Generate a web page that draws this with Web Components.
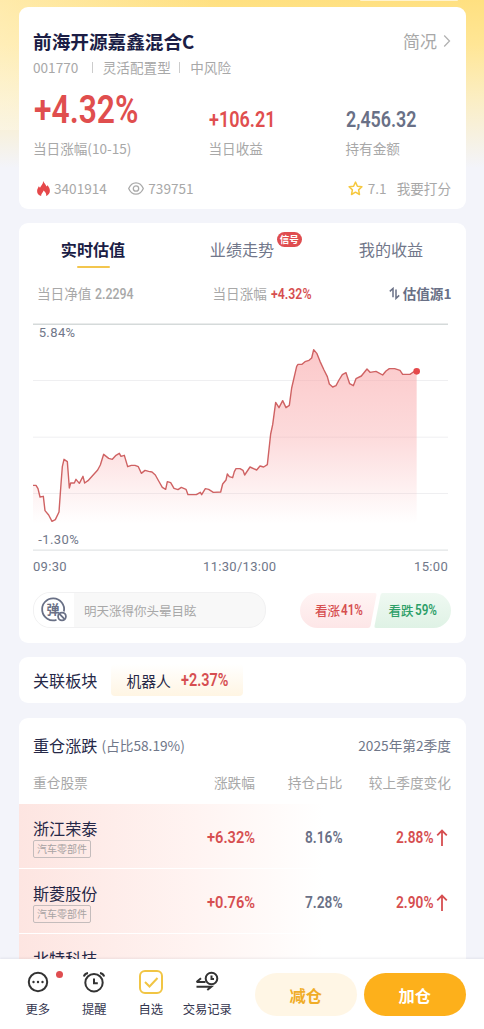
<!DOCTYPE html>
<html lang="zh-CN">
<head>
<meta charset="UTF-8">
<meta name="viewport" content="width=device-width, initial-scale=1.0">
<title>前海开源嘉鑫混合C</title>
<style>
    body {
        margin: 0;
        font-family: "Noto Sans CJK SC", sans-serif;
        overflow: hidden;
    }
</style>
</head>
<body>
<fund-page>
    <fund-summary></fund-summary>
    <fund-estimate></fund-estimate>
    <related-sector name="机器人" change="+2.37%"></related-sector>
    <fund-holdings>
        <stock-row name="浙江荣泰" tag="汽车零部件" change="+6.32%" share="8.16%" diff="2.88%"></stock-row>
        <stock-row name="斯菱股份" tag="汽车零部件" change="+0.76%" share="7.28%" diff="2.90%"></stock-row>
        <stock-row name="北特科技" tag="汽车零部件"></stock-row>
    </fund-holdings>
    <fund-toolbar slot="footer"></fund-toolbar>
</fund-page>

<script>
function define(name, html) {
    customElements.define(name, class extends HTMLElement {
        constructor() {
            super();
            this.attachShadow({ mode: 'open' });
        }

        connectedCallback() {
            this.shadowRoot.innerHTML = typeof html === 'function' ? html(this) : html;
        }
    });
}

// Condensed figures: cap = height of the digits, w = width of the whole number
define('num-text', (el) => {
    const cap = Number(el.getAttribute('cap'));
    const w = Number(el.getAttribute('w'));
    return `
        <style>
            :host { display: block; flex: none; }
            svg { display: block; overflow: visible; }
            text { font-family: Roboto, sans-serif; font-weight: var(--num-weight, 600); fill: currentColor; }
        </style>
        <svg width="${w}" height="${cap}">
            <text x="0" y="${cap}" font-size="${(cap / 0.711).toFixed(2)}" textLength="${w}" lengthAdjust="spacingAndGlyphs">${el.getAttribute('value')}</text>
        </svg>`;
});

define('fund-page', `
    <style>
        :host {
            display: flex;
            flex-direction: column;
            height: 1029px;
            overflow: hidden;
            background:
                linear-gradient(90deg, rgba(255, 250, 235, .4), rgba(255, 250, 235, 0) 45%) 0 0 / 100% 130px no-repeat,
                linear-gradient(180deg, #ffe080 0, #ffe696 45px, #fbeec4 100px, #f3f4fa 168px);
        }
        .peek {
            flex: none;
            width: 98px;
            height: 1px;
            margin-left: 360px;
            background: #fff3cd;
            border-radius: 0 0 6px 6px;
        }
        main {
            flex: 1;
            min-height: 0;
            overflow: hidden;
            display: flex;
            flex-direction: column;
            gap: 14.5px;
            padding: 6px 18.5px 0;
        }
    </style>
    <div class="peek"></div>
    <main><slot></slot></main>
    <slot name="footer"></slot>
`);

const card = `
    :host {
        display: block;
        flex: none;
        box-sizing: border-box;
        background: #fff;
        border-radius: 9px;
        white-space: nowrap;
    }
`;

define('fund-summary', `
    <style>
        ${card}
        :host { height: 201.5px; padding: 21px 14.5px 0; color: #a8a8a8; font-size: 13.6px; line-height: 20px; }
        header { display: flex; justify-content: space-between; align-items: center; height: 25px; }
        h1 { margin: 0; font-size: 18.7px; font-weight: 700; color: #1b1d45; letter-spacing: -.05px; }
        .more { display: flex; align-items: center; gap: 6px; font-size: 17px; }
        .meta { display: flex; align-items: center; margin-top: 4px; }
        .meta i { width: 1px; height: 11px; background: #ccc; margin: 0 10px 0 13.5px; }
        .meta i + span + i { margin: 0 10.5px 0 8px; }
        .metrics { display: grid; grid-template-columns: 175.5px 137px 1fr; height: 81px; }
        .metrics div { display: flex; flex-direction: column; justify-content: flex-end; }
        .metrics num-text { margin-bottom: 11px; }
        .metrics div:first-child num-text { margin: 0 0 15px 1px; }
        .red { color: #e04e4e; }
        .gray { color: #697086; }
        .stats { display: flex; align-items: center; height: 20px; margin-top: 20px; }
        .stats svg { margin-right: 4.5px; }
    </style>
    <header>
        <h1>前海开源嘉鑫混合C</h1>
        <span class="more">简况<svg width="8" height="14" viewBox="0 0 8 14" fill="none" stroke="#b2b2b2" stroke-width="1.3"><path d="M1.2 1.5 6.5 7 1.2 12.5"/></svg></span>
    </header>
    <div class="meta"><span>001770</span><i></i><span>灵活配置型</span><i></i><span>中风险</span></div>
    <div class="metrics">
        <div><num-text class="red" cap="27" w="104.5" value="+4.32%"></num-text>当日涨幅(10-15)</div>
        <div><num-text class="red" cap="16" w="66.5" value="+106.21"></num-text>当日收益</div>
        <div><num-text class="gray" cap="16" w="70.5" value="2,456.32"></num-text>持有金额</div>
    </div>
    <div class="stats">
        <svg style="margin-left:3.5px" width="13" height="15" viewBox="0 0 13 15"><path fill="#e5484a" d="M6.2 0C6.8 2.4 9.2 3.4 9.4 5.6L10.6 4.2C12 6 13 8 12.9 10c0 2.5-1.7 4.2-3.8 4.9.5-2.2-.6-3.9-2.6-5.4C6.4 11.3 4 12.3 4.1 14.9 1.6 14.2 0 12.3.1 9.9.2 8 1.2 6.6 1.8 5.2L3 6.8C4 4.6 6.1 3.3 6.2 0Z"/></svg>
        <span>3401914</span>
        <svg style="margin-left:21px" width="16" height="13" viewBox="0 0 16 13" fill="none" stroke="#aaa" stroke-width="1.3"><path d="M.7 6.5C2.3 2.7 5 .8 8 .8s5.7 1.9 7.3 5.7C13.7 10.3 11 12.2 8 12.2S2.3 10.3.7 6.5Z"/><circle cx="8" cy="6.5" r="2.7"/></svg>
        <span>739751</span>
        <svg style="margin-left:auto" width="15" height="15" viewBox="0 0 15 15" fill="none" stroke="#f6c83e" stroke-width="1.5" stroke-linejoin="round"><path d="m7.5 1.1 1.9 4.2 4.5.5-3.3 3.1.9 4.6-4-2.3-4 2.3.9-4.6L1.1 5.8l4.5-.5Z"/></svg>
        <span>7.1</span><span style="margin-left:10px">我要打分</span>
    </div>
`);

// Chart units are a third of a pixel
const points = [
    [39,496],[48,496],[54,506],[60,531],[70,529],[75,572],[86,585],[96,604],[106,599],[117,576],
    [123,492],[127,440],[132,418],[142,425],[148,504],[152,489],[163,489],[168,478],[178,490],[189,469],
    [194,489],[204,482],[233,450],[241,435],[251,403],[266,415],[277,418],[288,406],[298,400],[303,409],
    [313,406],[323,440],[334,436],[345,436],[355,440],[364,460],[375,451],[386,454],[396,456],[406,465],
    [416,483],[427,502],[437,508],[442,485],[452,488],[462,505],[474,509],[484,502],[498,508],[504,524],
    [529,524],[541,517],[545,524],[556,506],[566,508],[580,517],[602,516],[608,492],[618,480],[622,462],
    [628,470],[638,473],[643,455],[648,446],[660,446],[669,451],[674,465],[690,441],[710,450],[720,438],
    [731,441],[742,434],[752,342],[758,314],[767,247],[777,263],[788,242],[798,263],[808,256],[815,204],
    [830,139],[834,133],[846,133],[855,125],[867,121],[875,114],[881,89],[891,101],[900,124],[912,150],
    [922,170],[928,192],[938,201],[948,197],[957,180],[967,164],[978,158],[989,191],[1000,197],[1008,176],
    [1024,168],[1041,147],[1050,157],[1068,154],[1088,165],[1098,153],[1108,146],[1124,146],[1140,151],
    [1148,163],[1170,163],[1180,156],[1190,154]
];

define('estimate-chart', () => {
    const line = points.map((p) => p.join(' ')).join('L');
    return `
        <style>
            :host { display: block; font: 13px Roboto, sans-serif; letter-spacing: .3px; color: #707789; }
            svg { display: block; }
            text { font-size: 39px; letter-spacing: 1.2px; fill: currentColor; }
            .axis { display: flex; justify-content: space-between; line-height: 16px; margin-top: 6px; }
            .axis span:nth-child(2) { margin-left: -1.5px; }
        </style>
        <svg width="415" height="233" viewBox="39 0 1245 699">
            <defs>
                <linearGradient id="fill" gradientUnits="userSpaceOnUse" x1="0" y1="89" x2="0" y2="610">
                    <stop offset="0" stop-color="#f9a4a6" stop-opacity=".6"/>
                    <stop offset=".5" stop-color="#f9a4a6" stop-opacity=".4"/>
                    <stop offset="1" stop-color="#f9a4a6" stop-opacity="0"/>
                </linearGradient>
            </defs>
            <path d="M39 181.5H1284M39 351.5H1284M39 520.5H1284" stroke="#efeff1" stroke-width="3"/>
            <path d="M39 12.5H1284" stroke="#d5dada" stroke-width="4.5"/>
            <path d="M39 690.5H1284" stroke="#e2e5e6" stroke-width="4"/>
            <path d="M${line}V610H39Z" fill="url(#fill)"/>
            <path d="M${line}" fill="none" stroke="#cf6263" stroke-width="4.2" stroke-linejoin="round"/>
            <circle cx="1190" cy="154" r="10" fill="#e5484a"/>
            <text x="56" y="50">5.84%</text>
            <text x="55" y="673">-1.30%</text>
        </svg>
        <div class="axis"><span>09:30</span><span>11:30/13:00</span><span>15:00</span></div>`;
});

define('fund-estimate', `
    <style>
        ${card}
        :host { height: 419.5px; font-size: 13.6px; color: #a8a8a8; }
        .tabs { display: flex; padding-top: 12px; height: 33px; font-size: 16.1px; line-height: 28px; color: #71778a; text-align: center; }
        .tabs > span { flex: 1; }
        .tabs .on { font-weight: 700; color: #1b1d45; display: flex; flex-direction: column; align-items: center; }
        .on::after { content: ""; width: 33px; height: 2px; margin-top: 3px; background: #f3c64e; border-radius: 1px; }
        .tab { position: relative; }
        .badge {
            position: absolute;
            left: 67px;
            top: -5px;
            width: 25px;
            height: 15px;
            border-radius: 8px;
            background: #df4d50;
            color: #fff;
            font-size: 9.5px;
            line-height: 14.5px;
            font-weight: 700;
        }
        .info { display: grid; grid-template-columns: 175.5px 1fr auto; align-items: center; height: 20px; line-height: 20px; padding: 0 14px 0 18.5px; margin-top: 15px; }
        .info span { display: flex; align-items: center; gap: 4px; }
        .info span num-text { margin-top: 1px; --num-weight: 500; }
        .info .red { --num-weight: 600; }
        .info .source { color: #697086; font-weight: 600; gap: 3px; }
        estimate-chart { margin: 17px 17.5px 0 14.5px; }
        .votes { display: flex; justify-content: space-between; align-items: center; padding: 0 14.5px; margin-top: 17px; height: 36px; }
        .danmu { box-sizing: border-box; display: flex; align-items: center; width: 233px; height: 36px; border: 1px solid #f1f1f2; border-radius: 17px; overflow: hidden; background: #f8f8f8; font-size: 12.5px; }
        .danmu svg { flex: none; width: 40px; height: 34px; background: #fff; margin-right: 10px; }
        .danmu text { font-size: 13px; font-weight: 700; fill: #697086; }
        .vote { position: relative; display: flex; width: 151px; height: 35px; align-items: center; font-size: 12.5px; font-weight: 500; }
        .vote > svg { position: absolute; inset: 0; }
        .vote span { position: relative; display: flex; align-items: center; gap: 1px; }
        .vote num-text { margin-top: -1px; }
        .red { color: #d64e50; }
    </style>
    <div class="tabs">
        <span class="on">实时估值</span>
        <span><span class="tab">业绩走势<b class="badge">信号</b></span></span>
        <span>我的收益</span>
    </div>
    <div class="info">
        <span>当日净值<num-text cap="10.7" w="38.5" value="2.2294"></num-text></span>
        <span>当日涨幅<num-text class="red" cap="10.7" w="40.5" value="+4.32%"></num-text></span>
        <span class="source"><svg width="11" height="13" viewBox="0 0 11 13" fill="none" stroke="#697086" stroke-width="1.5"><path d="M.8 4.4 4 1.5V10.2M7 2.5V11.400L10.200 8.400"/></svg>估值源1</span>
    </div>
    <estimate-chart></estimate-chart>
    <div class="votes">
        <div class="danmu">
            <svg viewBox="0 0 40 34" fill="none" stroke="#697086" stroke-width="1.8">
                <path d="M29.900 18.500A11 11 0 1 0 22.500 26.800"/>
                <text x="12.500" y="21" stroke="none">弹</text>
                <circle cx="28" cy="23.500" r="3.900"/><path d="m25.200 20.700 5.600 5.600"/>
            </svg>
            明天涨得你头晕目眩
        </div>
        <div class="vote">
            <svg width="151" height="35" viewBox="0 0 151 35">
                <defs>
                    <linearGradient id="up" x2="0" y2="1"><stop stop-color="#fff4f4"/><stop offset="1" stop-color="#fde6e7"/></linearGradient>
                    <linearGradient id="down" x2="0" y2="1"><stop stop-color="#eff9f2"/><stop offset="1" stop-color="#dff2e5"/></linearGradient>
                </defs>
                <path fill="url(#up)" d="M17.5 0H75q2 0 1.500 2L70.500 33q-.5 2-2.500 2H17.500a17.500 17.500 0 0 1 0-35Z"/>
                <path fill="url(#down)" d="M82.500 0H133.500a17.500 17.500 0 0 1 0 35H76q-2 0-1.500-2L80.500 2q.5-2 2-2Z"/>
            </svg>
            <span class="red" style="margin-left:15px">看涨<num-text cap="11" w="22" value="41%"></num-text></span>
            <span style="margin-left:25.500px;color:#2d9f68">看跌<num-text cap="11" w="22" value="59%"></num-text></span>
        </div>
    </div>
`);

define('related-sector', (el) => `
    <style>
        ${card}
        :host { display: flex; align-items: center; height: 46px; padding-left: 14.5px; font-size: 16.1px; color: #262847; }
        .chip { display: flex; align-items: center; gap: 10px; height: 32px; padding: 0 15px; margin-left: 14px; border-radius: 4px; font-size: 14.8px; background: linear-gradient(180deg, #fff, #fff5e3); }
        num-text { color: #d64e50; margin-top: -1px; }
    </style>
    <span>关联板块</span>
    <span class="chip">${el.getAttribute('name')}<num-text cap="12.5" w="47.5" value="${el.getAttribute('change')}"></num-text></span>
`);

define('fund-holdings', `
    <style>
        ${card}
        :host { overflow: hidden; }
        header { display: flex; align-items: center; padding: 15px 14.5px 0; height: 25px; color: #707789; font-size: 13.7px; }
        h2 { margin: 0 4px 0 0; font-size: 16.1px; font-weight: 400; color: #262847; }
        header span:last-child { margin-left: auto; }
        .head {
            display: grid;
            grid-template-columns: 134px 88px 87.5px 1fr;
            padding: 14px 14.5px 12.5px;
            text-align: right;
            line-height: 20px;
            font-size: 13.7px;
            color: #a8a8a8;
        }
        .head span:first-child { text-align: left; }
    </style>
    <header><h2>重仓涨跌</h2><span>(占比58.19%)</span><span>2025年第2季度</span></header>
    <div class="head"><span>重仓股票</span><span>涨跌幅</span><span>持仓占比</span><span>较上季度变化</span></div>
    <slot></slot>
`);

define('stock-row', (el) => {
    const num = (attr, w) => el.hasAttribute(attr)
        ? `<num-text cap="12.3" w="${w}" value="${el.getAttribute(attr)}"></num-text>`
        : '';
    const arrow = '<svg width="12" height="17" viewBox="0 0 12 17" fill="none" stroke="#d64e50" stroke-width="1.8"><path d="M6 17V1.5M1.2 6.3 6 1.5l4.8 4.8"/></svg>';
    return `
        <style>
            :host {
                display: grid;
                grid-template-columns: 134px 88px 87.5px 1fr;
                height: 64px;
                padding: 0 14.5px;
                border-bottom: 1px solid #fff;
                background: linear-gradient(90deg, #fde5e1, #fff4f2 40%, #fffbfa 58%, #fff 68%) padding-box;
            }
            .stock { display: flex; flex-direction: column; align-items: flex-start; padding-top: 11.5px; }
            .name { font-size: 16.1px; line-height: 24px; color: #262847; }
            .tag { box-sizing: border-box; height: 18px; padding: 0 3px; border: 1px solid #c4bcbc; border-radius: 2px; font-size: 10px; line-height: 16px; color: #a8a3a3; }
            .cell { display: flex; justify-content: flex-end; align-items: center; gap: 3px; padding-top: 2px; color: #d64e50; }
            .share { color: #697086; }
            .diff { padding-right: 3px; }
        </style>
        <div class="stock"><span class="name">${el.getAttribute('name')}</span><span class="tag">${el.getAttribute('tag')}</span></div>
        <div class="cell">${num('change', 48)}</div>
        <div class="cell share">${num('share', 37.5)}</div>
        <div class="cell diff">${num('diff', 37.5)}${el.hasAttribute('diff') ? arrow : ''}</div>`;
});

define('fund-toolbar', `
    <style>
        :host {
            position: relative;
            box-sizing: border-box;
            display: flex;
            flex: none;
            height: 70px;
            padding: 11px 18px 0 9.5px;
            background: #fff;
            box-shadow: 0 -1px 2px rgba(40, 40, 60, .08);
            white-space: nowrap;
        }
        .item { position: relative; display: flex; flex-direction: column; align-items: center; width: 56.5px; font-size: 12.3px; line-height: 18px; color: #34364f; }
        .item svg { display: block; margin-bottom: 6px; fill: none; stroke: #333; stroke-width: 2; }
        .dot { position: absolute; left: 46.5px; top: 1px; width: 7px; height: 7px; border-radius: 50%; background: #df4d50; }
        .btn { width: 102.5px; height: 43px; margin-top: 3px; border-radius: 22px; font-size: 16.3px; line-height: 44px; font-weight: 700; text-align: center; }
        .sell { margin-left: 19px; background: #fff6e5; color: #f0ac27; }
        .buy { margin-left: 6.5px; background: #fdb01b; color: #fff; }
    </style>
    <div class="item">
        <svg width="24" height="24" viewBox="0 0 24 24"><circle cx="12" cy="12" r="9.2"/><g fill="#333" stroke="none"><circle cx="7.5" cy="12" r="1.2"/><circle cx="12" cy="12" r="1.2"/><circle cx="16.5" cy="12" r="1.2"/></g></svg>
        更多<i class="dot"></i>
    </div>
    <div class="item">
        <svg width="24" height="24" viewBox="0 0 24 24"><circle cx="12" cy="12.7" r="8.7"/><path d="M12 8.5V13.2H15.8M1.8 6.5C2.5 4.5 4 3.3 6 3M22.2 6.5C21.5 4.5 20 3.3 18 3"/></svg>
        提醒
    </div>
    <div class="item">
        <svg style="stroke:#f1c544" width="24" height="24" viewBox="0 0 24 24"><rect x="1" y="1" width="22" height="22" rx="5"/><path d="m6 12 4.5 4.5 8-8.5"/></svg>
        自选
    </div>
    <div class="item">
        <svg width="24" height="24" viewBox="0 0 24 24"><circle cx="16.5" cy="8.5" r="5.8"/><path d="M16.5 5.5V9H19M1.5 12H10.5M1.5 12 6 8.3M1.5 16.8H16.3L12.3 20"/></svg>
        交易记录
    </div>
    <div class="btn sell">减仓</div>
    <div class="btn buy">加仓</div>
`);
</script>
</body>
</html>
